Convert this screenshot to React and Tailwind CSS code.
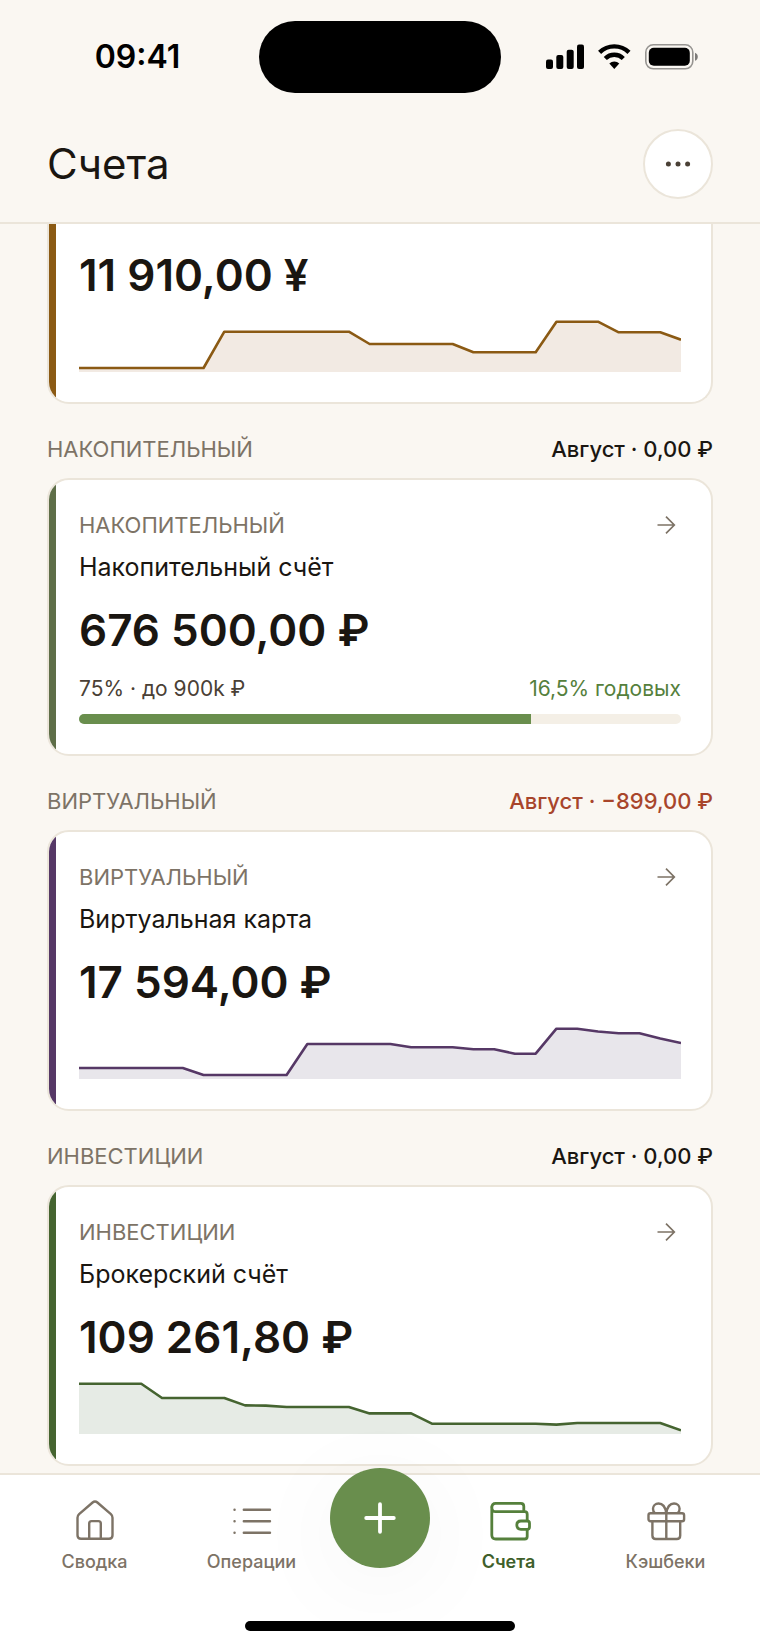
// src/App.jsx
import React from "react";

const accounts = [
  {
    id: "virtual",
    group: "Виртуальный",
    name: "Виртуальная карта",
    month: "Август · −899,00 ₽",
    monthColor: "text-[#a8452b]",
    amount: "17 594,00 ₽",
    strip: "bg-[#563866]",
    stroke: "stroke-[#563866]",
    fill: "fill-[#e8e6eb]",
    points: [
      43, 43, 43, 43, 43, 43, 50, 50, 50, 50, 50, 19, 19, 19, 19, 19, 22.3, 22.3, 22.3, 24.3, 24.3,
      28.7, 28.7, 3.7, 3.7, 6.5, 8.3, 8.3, 13.4, 18,
    ],
  },
  {
    id: "invest",
    group: "Инвестиции",
    name: "Брокерский счёт",
    month: "Август · 0,00 ₽",
    monthColor: "text-[#1a1611]",
    amount: "109 261,80 ₽",
    strip: "bg-[#456430]",
    stroke: "stroke-[#456430]",
    fill: "fill-[#e6ebe5]",
    points: [
      3.7, 3.7, 3.7, 3.7, 18, 18, 18, 18, 25.4, 25.6, 27, 27, 27, 27, 33.4, 33.4, 33.4, 43.7, 43.7,
      43.7, 43.7, 43.7, 43.7, 44.6, 43, 43, 43, 43, 43, 50.3,
    ],
  },
];

const yuanPoints = [
  50, 50, 50, 50, 50, 50, 50, 13.7, 13.7, 13.7, 13.7, 13.7, 13.7, 13.7, 26, 26, 26, 26, 26, 34.3,
  34.3, 34.3, 34.3, 3.7, 3.7, 3.7, 14.3, 14.3, 14.3, 21.7,
];

const Sparkline = ({ points, stroke, fill }) => {
  const last = points.length - 1;
  const line = points.map((y, x) => `${x} ${y}`).join(" L");
  return (
    <svg
      viewBox={`0 0 ${last} 54`}
      preserveAspectRatio="none"
      className="block w-full h-[54px]"
      aria-hidden="true"
    >
      <path d={`M0 54 L${line} L${last} 54 Z`} className={fill} />
      <path
        d={`M${line}`}
        fill="none"
        strokeWidth="2.6"
        strokeLinejoin="round"
        vectorEffect="non-scaling-stroke"
        className={stroke}
      />
    </svg>
  );
};

const ArrowIcon = () => (
  <svg
    viewBox="0 0 30 30"
    className="w-[30px] h-[30px] stroke-[#7d7366]"
    fill="none"
    strokeWidth="1.7"
    aria-hidden="true"
  >
    <path d="M6.5 15H23.2M15 6.7L23.3 15L15 23.3" />
  </svg>
);

const GroupHeader = ({ title, month, monthColor }) => (
  <div className="flex items-center justify-between h-[74px] pt-4 text-[22px] leading-7">
    <h2 className="uppercase text-[#7d7366]">{title}</h2>
    <span className={`font-medium ${monthColor}`}>{month}</span>
  </div>
);

const AccountCard = ({ group, name, amount, strip, children }) => (
  <a
    href="#account"
    className="flex rounded-[22px] border-2 border-[#ebe5da] bg-white overflow-hidden"
  >
    <div className={`w-[7px] shrink-0 ${strip}`} />
    <div className="flex-1 pl-[23px] pr-[30px] py-[30px]">
      <div className="flex items-center justify-between">
        <p className="uppercase text-[22px] leading-[30px] text-[#7d7366]">{group}</p>
        <ArrowIcon />
      </div>
      <h3 className="mt-2 text-[25px] leading-[38px]">{name}</h3>
      <p className="mt-4 mb-[15px] text-[44px] leading-[56px] font-semibold">{amount}</p>
      {children}
    </div>
  </a>
);

const HomeIcon = () => (
  <>
    <path d="M4.5 19.8C4.5 18.2 5 17.2 6.1 16.2L19.6 4.5C21.2 3.1 22.8 3.1 24.4 4.5L37.9 16.2C39 17.2 39.5 18.2 39.5 19.8V37.2C39.5 39.4 38.2 40.7 36 40.7H8C5.8 40.7 4.5 39.4 4.5 37.2Z" />
    <path d="M16.2 40.7V25.5C16.2 23.9 17 23.1 18.6 23.1H25.4C27 23.1 27.8 23.9 27.8 25.5V40.7" />
  </>
);

const ListIcon = () => (
  <>
    <path d="M13.8 11.7H40M13.8 23.3H40M13.8 34.7H40" strokeLinecap="round" />
    <path d="M4.5 11.7H4.6M4.5 23.3H4.6M4.5 34.7H4.6" strokeLinecap="round" />
  </>
);

const WalletIcon = () => (
  <>
    <path d="M36.8 13.7V8.3C36.8 6.3 35.8 5.3 33.8 5.3H8.8C6.2 5.3 4.8 6.9 4.8 9.5" />
    <path d="M40.2 23V16.2C40.2 14.6 39.3 13.7 37.7 13.7H8.8C6.3 13.7 4.8 12.2 4.8 9.5V37C4.8 39.6 6.2 41 8.8 41H37.7C39.3 41 40.2 40.1 40.2 38.5V31.3" />
    <path d="M40.2 23H34C31.4 23 29.8 24.7 29.8 27.1C29.8 29.6 31.4 31.3 34 31.3H40.2C41.8 31.3 42.5 30.6 42.5 29V25.3C42.5 23.7 41.8 23 40.2 23Z" />
  </>
);

const GiftIcon = () => (
  <>
    <rect x="4.5" y="15.2" width="35.6" height="8" rx="2" />
    <path d="M8.4 23.2V37.5C8.4 39.7 9.6 41 11.8 41H32.8C35 41 36.2 39.7 36.2 37.5V23.2M22.3 15.2V41" />
    <path d="M22.3 15.2C21.4 9.3 18.4 5.5 14.6 5.5C11.3 5.5 9 7.8 9 10.8C9 12.6 9.7 14.1 10.8 15.2M22.3 15.2C23.2 9.3 26.2 5.5 30 5.5C33.3 5.5 35.6 7.8 35.6 10.8C35.6 12.6 34.9 14.1 33.8 15.2" />
  </>
);

const NavItem = ({ label, active, children }) => (
  <a
    href="#nav"
    aria-current={active ? "page" : undefined}
    className={`flex flex-1 flex-col items-center gap-2 pt-[23px] text-[18px] leading-6 ${
      active ? "font-semibold text-[#3f5f2b]" : "font-medium text-[#7d7366]"
    }`}
  >
    <svg
      viewBox="0 0 44 44"
      className={`w-11 h-11 ${active ? "stroke-[#55803c]" : "stroke-[#7d7366]"}`}
      fill="none"
      strokeWidth={active ? "2.8" : "2.4"}
      strokeLinejoin="round"
      aria-hidden="true"
    >
      {children}
    </svg>
    {label}
  </a>
);

const StatusBar = () => (
  <div className="flex items-center px-4 pt-[21px] text-black">
    <div className="flex-1 text-center text-[32px] leading-10 font-semibold">09:41</div>
    <div className="w-[242px] h-[72px] rounded-full bg-black" />
    <div className="flex flex-1 items-center justify-center">
      <svg viewBox="0 0 154 26" className="w-[154px] h-[26px]" aria-hidden="true">
        {/* signal */}
        <rect x="0" y="15.5" width="7" height="9.5" rx="2" />
        <rect x="10.3" y="11" width="7" height="14" rx="2" />
        <rect x="20.7" y="5.7" width="7" height="19.3" rx="2" />
        <rect x="31" y="0.5" width="7" height="24.5" rx="2" />
        {/* wifi */}
        <g fill="none" stroke="black" strokeWidth="4.4">
          <path d="M53.6 8.4A21 21 0 0 1 83 8.4" />
          <path d="M59.3 14.5A12.8 12.8 0 0 1 77.3 14.5" />
        </g>
        <path d="M68.3 25L63.3 19.6A7.2 7.2 0 0 1 73.3 19.6Z" />
        {/* battery */}
        <rect
          x="99.8"
          y="0.8"
          width="47"
          height="24"
          rx="7.5"
          fill="none"
          stroke="black"
          strokeOpacity="0.4"
          strokeWidth="1.6"
        />
        <rect x="102.8" y="3.8" width="41" height="18" rx="5" />
        <path d="M149 8.8C150.8 9.4 151.8 11 151.8 12.8C151.8 14.6 150.8 16.2 149 16.8Z" fillOpacity="0.5" />
      </svg>
    </div>
  </div>
);

const App = () => {
  return (
    <div className="min-h-screen flex flex-col bg-[#faf7f2] text-[#1a1611] font-['Inter',sans-serif]">
      <StatusBar />

      <header className="flex items-center justify-between px-[47px] pt-9 pb-[23px] border-b-2 border-[#ebe5da]">
        <h1 className="text-[42px] leading-[52px]">Счета</h1>
        <button
          type="button"
          aria-label="Ещё"
          className="flex items-center justify-center w-[70px] h-[70px] rounded-full border-2 border-[#ebe5da] bg-white cursor-pointer"
        >
          <svg viewBox="0 0 28 8" className="w-7 h-2 fill-[#4a4035]" aria-hidden="true">
            <circle cx="4.4" cy="4" r="2.5" />
            <circle cx="14" cy="4" r="2.5" />
            <circle cx="23.6" cy="4" r="2.5" />
          </svg>
        </button>
      </header>

      <main className="flex-1 px-[47px] pb-[7px]">
        {/* Card scrolled under the header */}
        <div className="flex rounded-b-[22px] border-2 border-t-0 border-[#ebe5da] bg-white overflow-hidden">
          <div className="w-[7px] shrink-0 bg-[#8b5a14]" />
          <div className="flex-1 pl-[23px] pr-[30px] pt-[23px] pb-[30px]">
            <p className="mb-[15px] text-[44px] leading-[56px] font-semibold">11 910,00 ¥</p>
            <Sparkline points={yuanPoints} stroke="stroke-[#8b5a14]" fill="fill-[#f2eae3]" />
          </div>
        </div>

        {/* Savings */}
        <GroupHeader title="Накопительный" month="Август · 0,00 ₽" monthColor="text-[#1a1611]" />
        <AccountCard
          group="Накопительный"
          name="Накопительный счёт"
          amount="676 500,00 ₽"
          strip="bg-[#5e6e48]"
        >
          <div className="flex items-center justify-between text-[21px] leading-8">
            <span className="text-[#4a4035]">75% · до 900k ₽</span>
            <span className="text-[#55803c]">16,5% годовых</span>
          </div>
          <div className="mt-[9px] h-[10px] rounded-full bg-[#f4efe6] overflow-hidden">
            <div className="h-full bg-[#698e4d]" style={{ width: "75%" }} />
          </div>
        </AccountCard>

        {accounts.map((item) => (
          <section key={item.id}>
            <GroupHeader title={item.group} month={item.month} monthColor={item.monthColor} />
            <AccountCard
              group={item.group}
              name={item.name}
              amount={item.amount}
              strip={item.strip}
            >
              <Sparkline points={item.points} stroke={item.stroke} fill={item.fill} />
            </AccountCard>
          </section>
        ))}
      </main>

      {/* Bottom navigation */}
      <nav className="relative border-t-2 border-[#ebe5da] bg-white px-4 pb-4">
        <div className="flex items-start">
          <NavItem label="Сводка">
            <HomeIcon />
          </NavItem>
          <NavItem label="Операции">
            <ListIcon />
          </NavItem>
          <button
            type="button"
            aria-label="Добавить"
            className="flex items-center justify-center w-[100px] h-[100px] -mt-[7px] shrink-0 rounded-full bg-[#698e4d] shadow-[0_16px_100px_rgba(26,22,17,0.05)] cursor-pointer"
          >
            <svg
              viewBox="0 0 32 32"
              className="w-8 h-8 stroke-white"
              strokeWidth="3.8"
              strokeLinecap="round"
              aria-hidden="true"
            >
              <path d="M2.2 16H29.8M16 2.2V29.8" />
            </svg>
          </button>
          <NavItem label="Счета" active>
            <WalletIcon />
          </NavItem>
          <NavItem label="Кэшбеки">
            <GiftIcon />
          </NavItem>
        </div>
        <div className="mx-auto mt-[47px] w-[270px] h-[10px] rounded-full bg-black" />
      </nav>
    </div>
  );
};

export default App;
